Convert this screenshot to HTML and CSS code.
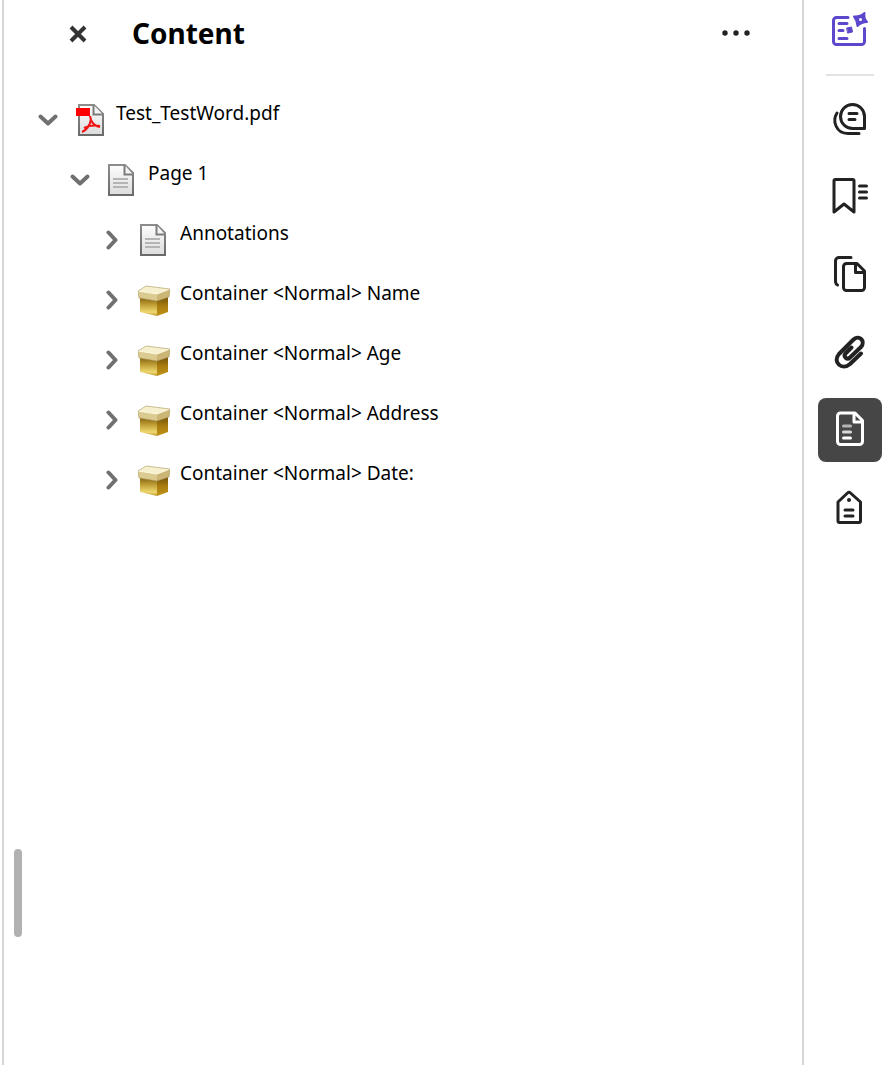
FILE: index.html
```html
<!DOCTYPE html>
<html lang="en">
<head>
    <meta charset="UTF-8">
    <meta name="viewport" content="width=device-width, initial-scale=1.0">
    <title>Content</title>
    <link rel="stylesheet" href="styles.css">
</head>
<body>
    <!-- shared icons for the tree -->
    <svg class="icon-defs" aria-hidden="true">
        <defs>
            <linearGradient id="paper" x1="0" y1="0" x2="0" y2="1">
                <stop offset="0" stop-color="#fdfdfd"/>
                <stop offset="1" stop-color="#dcdcdc"/>
            </linearGradient>
            <linearGradient id="edge" x1="0" y1="0" x2="0" y2="1">
                <stop offset="0" stop-color="#8c8c8c"/>
                <stop offset="1" stop-color="#6a6a6a"/>
            </linearGradient>
            <linearGradient id="box-front" x1="0" y1="0" x2="0" y2="1">
                <stop offset="0" stop-color="#7a5c14"/>
                <stop offset="0.35" stop-color="#b8962e"/>
                <stop offset="0.8" stop-color="#f0d870"/>
                <stop offset="1" stop-color="#b8942c"/>
            </linearGradient>
            <linearGradient id="box-side" x1="0" y1="0" x2="0" y2="1">
                <stop offset="0" stop-color="#6e4d08"/>
                <stop offset="0.5" stop-color="#a87c10"/>
                <stop offset="1" stop-color="#c29418"/>
            </linearGradient>
        </defs>
        <symbol id="chevron-down" viewBox="0 0 20 20">
            <path d="M2.5 6.5L10 13.5l7.5-7" fill="none" stroke="#707070" stroke-width="4" stroke-linecap="round" stroke-linejoin="round"/>
        </symbol>
        <symbol id="chevron-right" viewBox="0 0 20 20">
            <path d="M6.5 2.5L13.5 10l-7 7.5" fill="none" stroke="#707070" stroke-width="4" stroke-linecap="round" stroke-linejoin="round"/>
        </symbol>
        <symbol id="page" viewBox="0 0 32 32">
            <path d="M3 1h16l8 8v22H3z" fill="url(#paper)" stroke="url(#edge)" stroke-width="2"/>
            <path d="M18.5 1v9.5H27" fill="#f4f4f4" stroke="#7c7c7c" stroke-width="2"/>
            <path d="M7 15h15M7 19h15M7 23h15" stroke="#b4b4b4" stroke-width="2"/>
        </symbol>
        <symbol id="box" viewBox="0 0 32 32">
            <path d="M2 13l17 3v16L2 28z" fill="url(#box-front)"/>
            <path d="M19 16l11-4v16l-11 4z" fill="url(#box-side)"/>
            <path d="M0 7l8-5 24 3-13 5z" fill="#f7f0cf"/>
            <path d="M0 7l19 3v7L1 14z" fill="#dccb90"/>
            <path d="M19 10l13-5-1 8-12 4z" fill="#cbb676"/>
            <path d="M0 7l19 3 13-5" fill="none" stroke="#fbf6dd"/>
            <path d="M0 7l8-5 24 3-1 8-12 4-18-3z" fill="none" stroke="#a8965c" stroke-opacity=".6"/>
        </symbol>
    </svg>

    <div class="app">
        <main class="panel">
            <div class="gutter"><span class="thumb"></span></div>
            <div class="panel-body">
                <header class="panel-header">
                    <button class="close" type="button" aria-label="Close">
                        <svg width="20" height="20" viewBox="0 0 20 20"><path d="M3 4l14 14M17 4L3 18" stroke="#333" stroke-width="4"/></svg>
                    </button>
                    <h1>Content</h1>
                    <button class="more" type="button" aria-label="More options">
                        <svg width="30" height="20" viewBox="0 0 30 20" fill="#222"><circle cx="4" cy="10" r="2.7"/><circle cx="15" cy="10" r="2.7"/><circle cx="26" cy="10" r="2.7"/></svg>
                    </button>
                </header>

                <ul class="tree">
                    <li>
                        <div class="row">
                            <button class="toggle" type="button" aria-expanded="true" aria-label="Collapse Test_TestWord.pdf"><svg><use href="#chevron-down"/></svg></button>
                            <svg class="node-icon" viewBox="0 0 32 32">
                                <path d="M5 1h15l9 9v21H5z" fill="url(#paper)" stroke="url(#edge)" stroke-width="2"/>
                                <path d="M19.5 1v9.5H29" fill="#f4f4f4" stroke="#7c7c7c" stroke-width="2"/>
                                <path d="M2 4h14v8H2z" fill="#f00"/>
                                <path d="M16 12c1 7 4 10 10 11M17 15c-1 6-4 11-9 13M10 24c4-2 9-3 16-2" fill="none" stroke="#f01414" stroke-width="2"/>
                            </svg>
                            <span class="label">Test_TestWord.pdf</span>
                        </div>
                        <ul>
                            <li>
                                <div class="row">
                                    <button class="toggle" type="button" aria-expanded="true" aria-label="Collapse Page 1"><svg><use href="#chevron-down"/></svg></button>
                                    <svg class="node-icon"><use href="#page"/></svg>
                                    <span class="label">Page 1</span>
                                </div>
                                <ul>
                                    <li class="row">
                                        <button class="toggle" type="button" aria-expanded="false" aria-label="Expand Annotations"><svg><use href="#chevron-right"/></svg></button>
                                        <svg class="node-icon"><use href="#page"/></svg>
                                        <span class="label">Annotations</span>
                                    </li>
                                    <li class="row">
                                        <button class="toggle" type="button" aria-expanded="false" aria-label="Expand Name"><svg><use href="#chevron-right"/></svg></button>
                                        <svg class="node-icon"><use href="#box"/></svg>
                                        <span class="label">Container &lt;Normal&gt; Name</span>
                                    </li>
                                    <li class="row">
                                        <button class="toggle" type="button" aria-expanded="false" aria-label="Expand Age"><svg><use href="#chevron-right"/></svg></button>
                                        <svg class="node-icon"><use href="#box"/></svg>
                                        <span class="label">Container &lt;Normal&gt; Age</span>
                                    </li>
                                    <li class="row">
                                        <button class="toggle" type="button" aria-expanded="false" aria-label="Expand Address"><svg><use href="#chevron-right"/></svg></button>
                                        <svg class="node-icon"><use href="#box"/></svg>
                                        <span class="label">Container &lt;Normal&gt; Address</span>
                                    </li>
                                    <li class="row">
                                        <button class="toggle" type="button" aria-expanded="false" aria-label="Expand Date"><svg><use href="#chevron-right"/></svg></button>
                                        <svg class="node-icon"><use href="#box"/></svg>
                                        <span class="label">Container &lt;Normal&gt; Date:</span>
                                    </li>
                                </ul>
                            </li>
                        </ul>
                    </li>
                </ul>
            </div>
        </main>

        <nav class="rail" aria-label="Side panels">
            <button class="tool assistant" type="button" aria-label="AI Assistant">
                <svg viewBox="0 0 40 40">
                    <path d="M18 7.5H6.5a3 3 0 0 0-3 3v21a3 3 0 0 0 3 3h25a3 3 0 0 0 3-3V18.500M9 13.500h8M9 20.500h4M9 28.500h8"/>
                    <path class="solid" d="M34.5 3Q33.5 8 37 12Q31.5 12 27.5 16Q27 10 24 6.500Q30 7 34.500 3z" stroke-width="2"/>
                    <path class="solid" d="M17 18l4.5-1 1 5-4.500 1z" stroke-width="1"/>
                    <circle cx="30.5" cy="9.5" r="1.5" fill="#fff" stroke="none"/>
                </svg>
            </button>
            <hr>
            <button class="tool" type="button" aria-label="Comments">
                <svg viewBox="0 0 40 40"><path d="M34.5 30.5h-12a12 12 0 1 1 12-12zM19 15.5h8M19 21.5h6M7 15C2 23 6 35.5 18 35.5h11"/></svg>
            </button>
            <button class="tool" type="button" aria-label="Bookmarks">
                <svg viewBox="0 0 40 40"><path d="M4 36V5a1.500 1.500 0 0 1 1.500-1.500h17A1.500 1.500 0 0 1 24 5v31L14 28zM29.500 10h7M29.500 16h7M29.500 22h7"/></svg>
            </button>
            <button class="tool" type="button" aria-label="Page thumbnails">
                <svg viewBox="0 0 40 40"><path d="M16.500 9.500H27l7.500 7.500v16.500a3 3 0 0 1-3 3h-15a3 3 0 0 1-3-3v-21a3 3 0 0 1 3-3zM25.500 10v8.500H34M21 3.500H9A3.500 3.500 0 0 0 5.500 7v20q0 3 2 4"/></svg>
            </button>
            <button class="tool" type="button" aria-label="Attachments">
                <svg class="clip" viewBox="0 0 40 40"><path d="M31 21.500L20 32c-8 7-18-2-11-10L23 8c6-6 13 1 8 7L20 25.500c-3 3-7-1-4.500-4L21.500 15.500"/></svg>
            </button>
            <button class="tool active" type="button" aria-label="Content" aria-pressed="true">
                <svg viewBox="0 0 40 40">
                    <path d="M10.500 3H25l7.500 7.500v21a3 3 0 0 1-3 3h-19a3 3 0 0 1-3-3V6a3 3 0 0 1 3-3zM24 3.500v8.500h8"/>
                    <path d="M13.500 16h7" stroke="#b4b4b4"/>
                    <path d="M13.500 22h7" stroke="#d8d8d8"/>
                    <path d="M13.500 28h7"/>
                </svg>
            </button>
            <button class="tool" type="button" aria-label="Tags">
                <svg viewBox="0 0 40 40"><path d="M8 33V14l9.500-9q1.500-1.500 3 0l10 9v19a1.500 1.500 0 0 1-1.500 1.500H9.500A1.500 1.500 0 0 1 8 33zM15 22h8M15 28h8"/><circle cx="19" cy="12" r="2" fill="#222" stroke="none"/></svg>
            </button>
        </nav>
    </div>
</body>
</html>
```
FILE: styles.css
```css
* {
    box-sizing: border-box;
}

body {
    margin: 0;
    background-color: #fff;
    color: #000;
    font-family: "Noto Sans", sans-serif;
    font-size: 19px;
}

button {
    display: flex;
    justify-content: center;
    align-items: center;
    padding: 0;
    border: none;
    background: none;
    cursor: pointer;
}

.icon-defs {
    position: absolute;
    width: 0;
    height: 0;
}

.app {
    display: flex;
    min-height: 100vh;
    padding-left: 2px;
}

.panel {
    display: flex;
    flex: 1;
    border-left: 2px solid #d5d5d5;
    border-right: 2px solid #d5d5d5;
}

.gutter {
    display: flex;
    align-items: flex-end;
    padding: 0 8px 12vh 10px;
}

.thumb {
    width: 8px;
    height: 88px;
    border-radius: 4px;
    background-color: #b1b1b1;
}

.panel-body {
    flex: 1;
}

.panel-header {
    display: flex;
    align-items: center;
    height: 66px;
    padding: 0 46px 0 30px;
}

.close {
    width: 36px;
    height: 36px;
}

h1 {
    flex: 1;
    margin: 0 0 0 36px;
    font-size: 28px;
    line-height: 40px;
}

.more {
    width: 40px;
    height: 36px;
}

.tree,
.tree ul {
    margin: 0;
    padding: 0;
    list-style: none;
}

.tree {
    padding: 24px 0 0 8px;
}

.tree ul {
    padding-left: 32px;
}

.row {
    display: flex;
    align-items: center;
    height: 60px;
}

.toggle,
.toggle svg {
    width: 20px;
    height: 20px;
}

.node-icon {
    width: 32px;
    height: 32px;
    margin: 0 10px 0 16px;
}

.label {
    align-self: flex-start;
    line-height: 46px;
    white-space: nowrap;
}

.rail {
    display: flex;
    flex-direction: column;
    gap: 14px;
    width: 88px;
    padding: 0 10px 0 14px;
}

.rail hr {
    width: 48px;
    height: 2px;
    margin: 0 auto -4px;
    border: none;
    background-color: #e3e3e3;
}

.tool {
    width: 64px;
    height: 64px;
    border-radius: 8px;
    color: #222;
}

.tool svg {
    width: 40px;
    height: 40px;
    fill: none;
    stroke: currentColor;
    stroke-width: 3;
    stroke-linecap: round;
    stroke-linejoin: round;
}

.tool .clip {
    stroke-width: 4;
}

.assistant {
    height: 60px;
    color: #5c48cc;
}

.tool .solid {
    fill: currentColor;
}

.active {
    background-color: #464646;
    color: #fff;
}
```
